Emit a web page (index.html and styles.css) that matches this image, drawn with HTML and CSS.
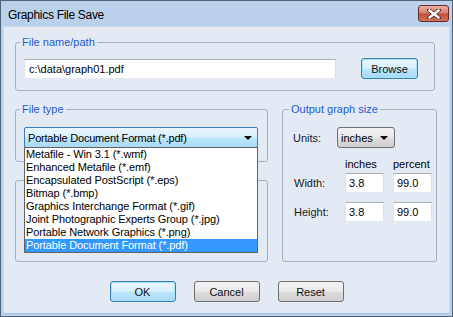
FILE: index.html
```html
<!DOCTYPE html>
<html lang="en">

<head>
  <meta charset="UTF-8">
  <meta name="viewport" content="width=device-width, initial-scale=1.0">
  <title>Graphics File Save</title>
  <link rel="stylesheet" href="styles.css">
</head>

<body>
  <div class="window">
    <div class="titlebar">
      <span class="title">Graphics File Save</span>
      <button class="close" aria-label="Close">
        <svg width="14" height="10" viewBox="0 0 14 10">
          <path d="M2 1 L12 9 M12 1 L2 9" stroke="#5a2a22" stroke-width="4" stroke-linecap="square" fill="none"/>
          <path d="M2.5 1.5 L11.5 8.5 M11.5 1.5 L2.5 8.5" stroke="#fff" stroke-width="2.4" stroke-linecap="square" fill="none"/>
        </svg>
      </button>
    </div>

    <div class="client">
      <fieldset class="group path-group">
        <legend>File name/path</legend>
        <div class="path-row">
          <input class="text path" type="text" value="c:\data\graph01.pdf">
          <button class="btn focused browse">Browse</button>
        </div>
      </fieldset>

      <div class="middle">
        <div class="left-col">
          <fieldset class="group type-group">
            <legend>File type</legend>
            <div class="combo-wrap">
              <div class="combo open">
                <span>Portable Document Format (*.pdf)</span>
                <span class="arrow"></span>
              </div>
              <ul class="droplist">
                <li>Metafile - Win 3.1 (*.wmf)</li>
                <li>Enhanced Metafile (*.emf)</li>
                <li>Encapsulated PostScript (*.eps)</li>
                <li>Bitmap (*.bmp)</li>
                <li>Graphics Interchange Format (*.gif)</li>
                <li>Joint Photographic Experts Group (*.jpg)</li>
                <li>Portable Network Graphics (*.png)</li>
                <li class="selected">Portable Document Format (*.pdf)</li>
              </ul>
            </div>
          </fieldset>
          <div class="group blank-group"></div>
        </div>

        <fieldset class="group size-group">
          <legend>Output graph size</legend>
          <div class="units-row">
            <span class="label">Units:</span>
            <div class="combo units">
              <span>inches</span>
              <span class="arrow"></span>
            </div>
          </div>
          <div class="size-grid">
            <span></span>
            <span class="head">inches</span>
            <span class="head">percent</span>
            <span class="label">Width:</span>
            <input class="text num" type="text" value="3.8">
            <input class="text num" type="text" value="99.0">
            <span class="label">Height:</span>
            <input class="text num" type="text" value="3.8">
            <input class="text num" type="text" value="99.0">
          </div>
        </fieldset>
      </div>

      <div class="actions">
        <button class="btn focused">OK</button>
        <button class="btn">Cancel</button>
        <button class="btn">Reset</button>
      </div>
    </div>
  </div>
</body>

</html>
```

FILE: styles.css
```css
body {
  margin: 0;
  font-family: "Liberation Sans", Arial, sans-serif;
  font-size: 11px;
  color: #000;
  overflow: hidden;
}

.window {
  width: 453px;
  height: 317px;
  box-sizing: border-box;
  border: 1px solid #4f6379;
  background: #b9d1ea;
  padding: 0 2px 2px;
  display: flex;
  flex-direction: column;
}

.titlebar {
  height: 25px;
  display: flex;
  align-items: center;
  justify-content: space-between;
  padding-left: 5px;
}

.title {
  font-size: 12px;
  letter-spacing: -0.3px;
  padding-top: 3px;
  color: #000;
}

.close {
  width: 31px;
  height: 17px;
  margin-right: 1px;
  padding: 0;
  border: 1px solid #6b2b22;
  border-radius: 3px;
  background: linear-gradient(#e9b0a5, #d7806f 45%, #c24f3a 55%, #d0735c);
  display: flex;
  align-items: center;
  justify-content: center;
}

.client {
  flex: 1;
  background: #e4eaf3;
  border: 1px solid #c9dbee;
  border-bottom-color: #9fc3e6;
  padding: 9px 0 0 11px;
}

.group {
  margin: 0;
  border: 1px solid #a5b2c2;
  border-radius: 3px;
  box-sizing: border-box;
}

legend {
  color: #1e5cd0;
  font-size: 11px;
  line-height: 13px;
  padding: 0 2px;
  margin-left: -4px;
}

.path-group {
  width: 420px;
  padding: 9px 16px 11px 8px;
}

.path-row {
  display: flex;
  align-items: center;
  height: 21px;
}

.text {
  font-family: inherit;
  font-size: 11px;
  height: 20px;
  box-sizing: border-box;
  margin: 0;
  padding: 0 4px;
  border: 1px solid;
  border-color: #abadb3 #dbdfe6 #e3e9ef #e2e3ea;
  background: #fff;
  outline: none;
}

.path {
  width: 312px;
}

.btn {
  font-family: inherit;
  font-size: 11px;
  font-weight: normal;
  width: 66px;
  height: 21px;
  padding: 0;
  border: 1px solid #707070;
  border-radius: 3px;
  background: linear-gradient(#f2f2f2, #ebebeb 48%, #dddddd 52%, #cfcfcf);
  color: #111;
}

.btn.focused {
  border-color: #3c7fb1;
  box-shadow: inset 0 0 0 1px #a8e0f8;
  background: linear-gradient(#eaf6fd, #d9f0fc 48%, #bee6fd 52%, #a7d9f5);
}

.browse {
  width: 57px;
  margin-left: 25px;
}

.middle {
  display: flex;
  gap: 14px;
  margin-top: 12px;
}

.left-col {
  width: 253px;
  display: flex;
  flex-direction: column;
}

.type-group {
  padding: 11px 9px 13px 8px;
}

.combo-wrap {
  position: relative;
}

.combo {
  height: 21px;
  box-sizing: border-box;
  border: 1px solid #707070;
  border-radius: 3px;
  background: linear-gradient(#f2f2f2, #ebebeb 48%, #dddddd 52%, #cfcfcf);
  display: flex;
  align-items: center;
  justify-content: space-between;
  padding: 0 5px 0 3px;
}

.combo.open {
  width: 234px;
  letter-spacing: -0.2px;
  border-color: #3c7fb1;
  border-radius: 2px;
  background: linear-gradient(#eaf6fd, #d9f0fc 48%, #bee6fd 52%, #a7d9f5);
}

.arrow {
  width: 0;
  height: 0;
  border-left: 4px solid transparent;
  border-right: 4px solid transparent;
  border-top: 4px solid #000;
}

.droplist {
  position: absolute;
  top: 20px;
  left: 0;
  width: 234px;
  box-sizing: border-box;
  margin: 0;
  padding: 0;
  list-style: none;
  background: #fff;
  border: 1px solid #646464;
  letter-spacing: -0.1px;
  z-index: 2;
}

.droplist li {
  line-height: 13px;
  padding-left: 1px;
  white-space: nowrap;
}

.droplist .selected {
  background: #3399ff;
  color: #fff;
}

.blank-group {
  margin-top: 18px;
  height: 82px;
}

.size-group {
  width: 155px;
  padding: 11px 0 0 10px;
}

.units-row {
  display: flex;
  align-items: center;
  height: 21px;
}

.units-row .label {
  width: 44px;
}

.units {
  width: 58px;
  padding: 0 6px 0 3px;
}

.label {
  color: #1a1a1a;
}

.size-grid {
  display: grid;
  grid-template-columns: 43px 39px 39px;
  grid-template-rows: 15px 29px 20px;
  column-gap: 9px;
  margin-top: 10px;
}

.size-grid .label {
  line-height: 20px;
  padding-left: 1px;
}

.head {
  line-height: 13px;
  white-space: nowrap;
}

.num {
  width: 39px;
  padding: 0 3px;
}

.actions {
  display: flex;
  justify-content: center;
  gap: 18px;
  margin-top: 19px;
  padding-right: 11px;
}
```
